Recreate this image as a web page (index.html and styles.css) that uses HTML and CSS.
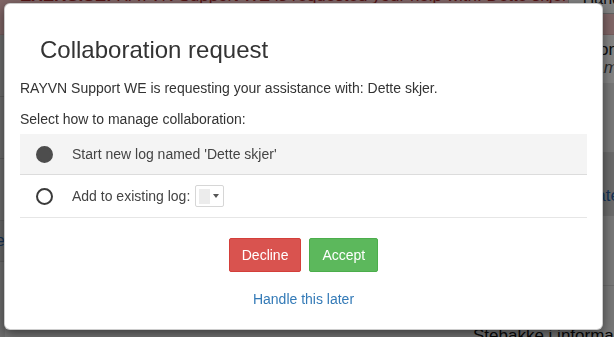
FILE: index.html
```html
<!DOCTYPE html>
<html>
<head>
	<meta charset="utf-8">
	<title>Collaboration request</title>
	<link rel="stylesheet" href="styles.css">
</head>
<body>

<div class="page">
	<div class="alert-bar">
		<span class="alert-text"><strong>EXERCISE:</strong> RAYVN Support WE is requested your help with: Dette skjer</span>
		<span class="alert-btn">Handle request</span>
	</div>
	<div class="page-body">
		<div class="side-col">
			<div class="side-row"></div>
			<div class="side-row"></div>
			<div class="side-row"></div>
			<div class="side-row link-row"><span class="page-link">Update</span></div>
		</div>
		<div class="main-col">
			<div class="info-card">
				<div class="info-line">Notification</div>
				<div class="info-line muted">10:42 am</div>
			</div>
			<div class="main-row"></div>
			<div class="main-row dark"><span class="page-link">Collaborate</span></div>
			<div class="main-row"></div>
			<div class="main-foot">Stebakke i informasjon</div>
		</div>
	</div>
</div>

<div class="backdrop"></div>

<div class="modal">
	<h3 class="modal-title">Collaboration request</h3>
	<p class="lead-line">RAYVN Support WE is requesting your assistance with: Dette skjer.</p>
	<p class="choose-line">Select how to manage collaboration:</p>

	<div class="options">
		<label class="option selected">
			<span class="radio checked"></span>
			<span>Start new log named 'Dette skjer'</span>
		</label>
		<label class="option">
			<span class="radio"></span>
			<span>Add to existing log:</span>
			<span class="log-select"><span class="swatch"></span><span class="caret"></span></span>
		</label>
	</div>

	<div class="actions">
		<button class="btn btn-decline">Decline</button>
		<button class="btn btn-accept">Accept</button>
	</div>
	<div class="later">
		<a href="#" class="later-link">Handle this later</a>
	</div>
</div>

</body>
</html>
```

FILE: styles.css
```css
html, body {
	margin: 0;
	height: 100%;
	overflow: hidden;
}

body {
	font-family: 'Liberation Sans', Arial, sans-serif;
	font-size: 14px;
	line-height: 20px;
	color: #333;
	background-color: #fff;
}

/* page behind the dialog */

.alert-bar {
	display: flex;
	align-items: flex-start;
	justify-content: space-between;
	height: 35px;
	padding: 0 26px 0 20px;
	background-color: #f5c4c6;
	border-bottom: 1px solid #e2b3b3;
	color: #a4282a;
	font-size: 17px;
	line-height: 20px;
	box-sizing: border-box;
	white-space: nowrap;
	overflow: hidden;
}

.alert-text {
	margin-top: -14px;
}

.alert-btn {
	margin-top: -16px;
	padding: 4px 14px;
	border: 1px solid #bbb;
	background-color: #fafafa;
	color: #222;
	font-size: 16px;
}

.page-body {
	display: flex;
	height: 302px;
	overflow: hidden;
}

.side-col {
	flex-shrink: 0;
	width: 5px;
	background-color: #d4d4d4;
}

.side-row {
	height: 61px;
	border-bottom: 1px solid #b8b8b8;
}

.side-row.link-row {
	height: 40px;
	display: flex;
	align-items: center;
	justify-content: flex-end;
	background-color: #c8c8c8;
}

.main-col {
	flex: 1;
	min-width: 0;
	display: flex;
	flex-direction: column;
	background-color: #e6e6e6;
}

.main-col > div {
	flex-shrink: 0;
}

.info-card {
	align-self: flex-end;
	display: flex;
	flex-direction: column;
	align-items: flex-end;
	width: 120px;
	height: 48px;
	box-sizing: border-box;
	padding-top: 6px;
	margin-right: -4px;
	background-color: #fdfdfd;
	font-size: 17px;
	line-height: 18px;
	color: #222;
	white-space: nowrap;
}

.info-card .muted {
	font-style: italic;
	color: #555;
}

.main-row {
	height: 69px;
	border-bottom: 1px solid #cfcfcf;
	display: flex;
	align-items: flex-end;
	justify-content: flex-end;
}

.main-row.dark {
	height: 63px;
	padding-bottom: 9px;
	box-sizing: border-box;
	background-color: #cdcdcd;
}

.page-link {
	color: #2a64a8;
	font-size: 17px;
	white-space: nowrap;
}

.main-row .page-link {
	margin-right: -6px;
}

.main-foot {
	padding: 40px 0 0 468px;
	font-size: 17px;
	color: #111;
	white-space: nowrap;
}

.backdrop {
	position: fixed;
	top: 0;
	right: 0;
	bottom: 0;
	left: 0;
	background-color: rgba(0, 0, 0, .48);
}

/* dialog */

.modal {
	position: absolute;
	top: 3px;
	left: 4px;
	width: 599px;
	height: 327px;
	box-sizing: border-box;
	padding: 0 15px;
	background-color: #fff;
	border: 1px solid rgba(0, 0, 0, .2);
	border-radius: 6px;
	box-shadow: 0 4px 12px rgba(0, 0, 0, .5);
}

.modal-title {
	margin: 33px 0 0 20px;
	font-size: 24px;
	font-weight: normal;
	line-height: 26px;
	color: #333;
}

.lead-line {
	margin: 15px 0 0 0;
}

.choose-line {
	margin: 11px 0 0 0;
}

.options {
	margin-top: 5px;
}

.option {
	display: flex;
	align-items: center;
	height: 40px;
	padding-left: 16px;
	border-bottom: 1px solid #e6e6e6;
	color: #444;
}

.option.selected {
	background-color: #f4f4f4;
	border-bottom-color: #dcdcdc;
}

.option + .option {
	height: 42px;
}

.radio {
	width: 17px;
	height: 17px;
	box-sizing: border-box;
	margin-right: 19px;
	border: 2px solid #3a3a3a;
	border-radius: 50%;
	background-color: #fff;
}

.radio.checked {
	border-color: #4d4d4d;
	background-color: #4d4d4d;
}

.log-select {
	display: flex;
	align-items: center;
	width: 29px;
	height: 22px;
	box-sizing: border-box;
	margin-left: 5px;
	padding: 2px 0 2px 3px;
	border: 1px solid #d6d6d6;
	border-radius: 2px;
}

.swatch {
	width: 11px;
	height: 15px;
	background-color: #ececec;
}

.caret {
	margin-left: 3px;
	width: 0;
	height: 0;
	border-left: 3px solid transparent;
	border-right: 3px solid transparent;
	border-top: 4px solid #555;
}

.actions {
	display: flex;
	justify-content: center;
	gap: 8px;
	margin-top: 20px;
}

.btn {
	height: 34px;
	padding: 6px 12px;
	border: 1px solid transparent;
	border-radius: 2px;
	font-family: inherit;
	font-size: 14px;
	line-height: 20px;
	color: #fff;
	cursor: pointer;
}

.btn-decline {
	background-color: #d9534f;
	border-color: #d43f3a;
}

.btn-accept {
	background-color: #5cb85c;
	border-color: #4cae4c;
}

.later {
	margin-top: 17px;
	text-align: center;
}

.later-link {
	color: #337ab7;
	text-decoration: none;
}
```
